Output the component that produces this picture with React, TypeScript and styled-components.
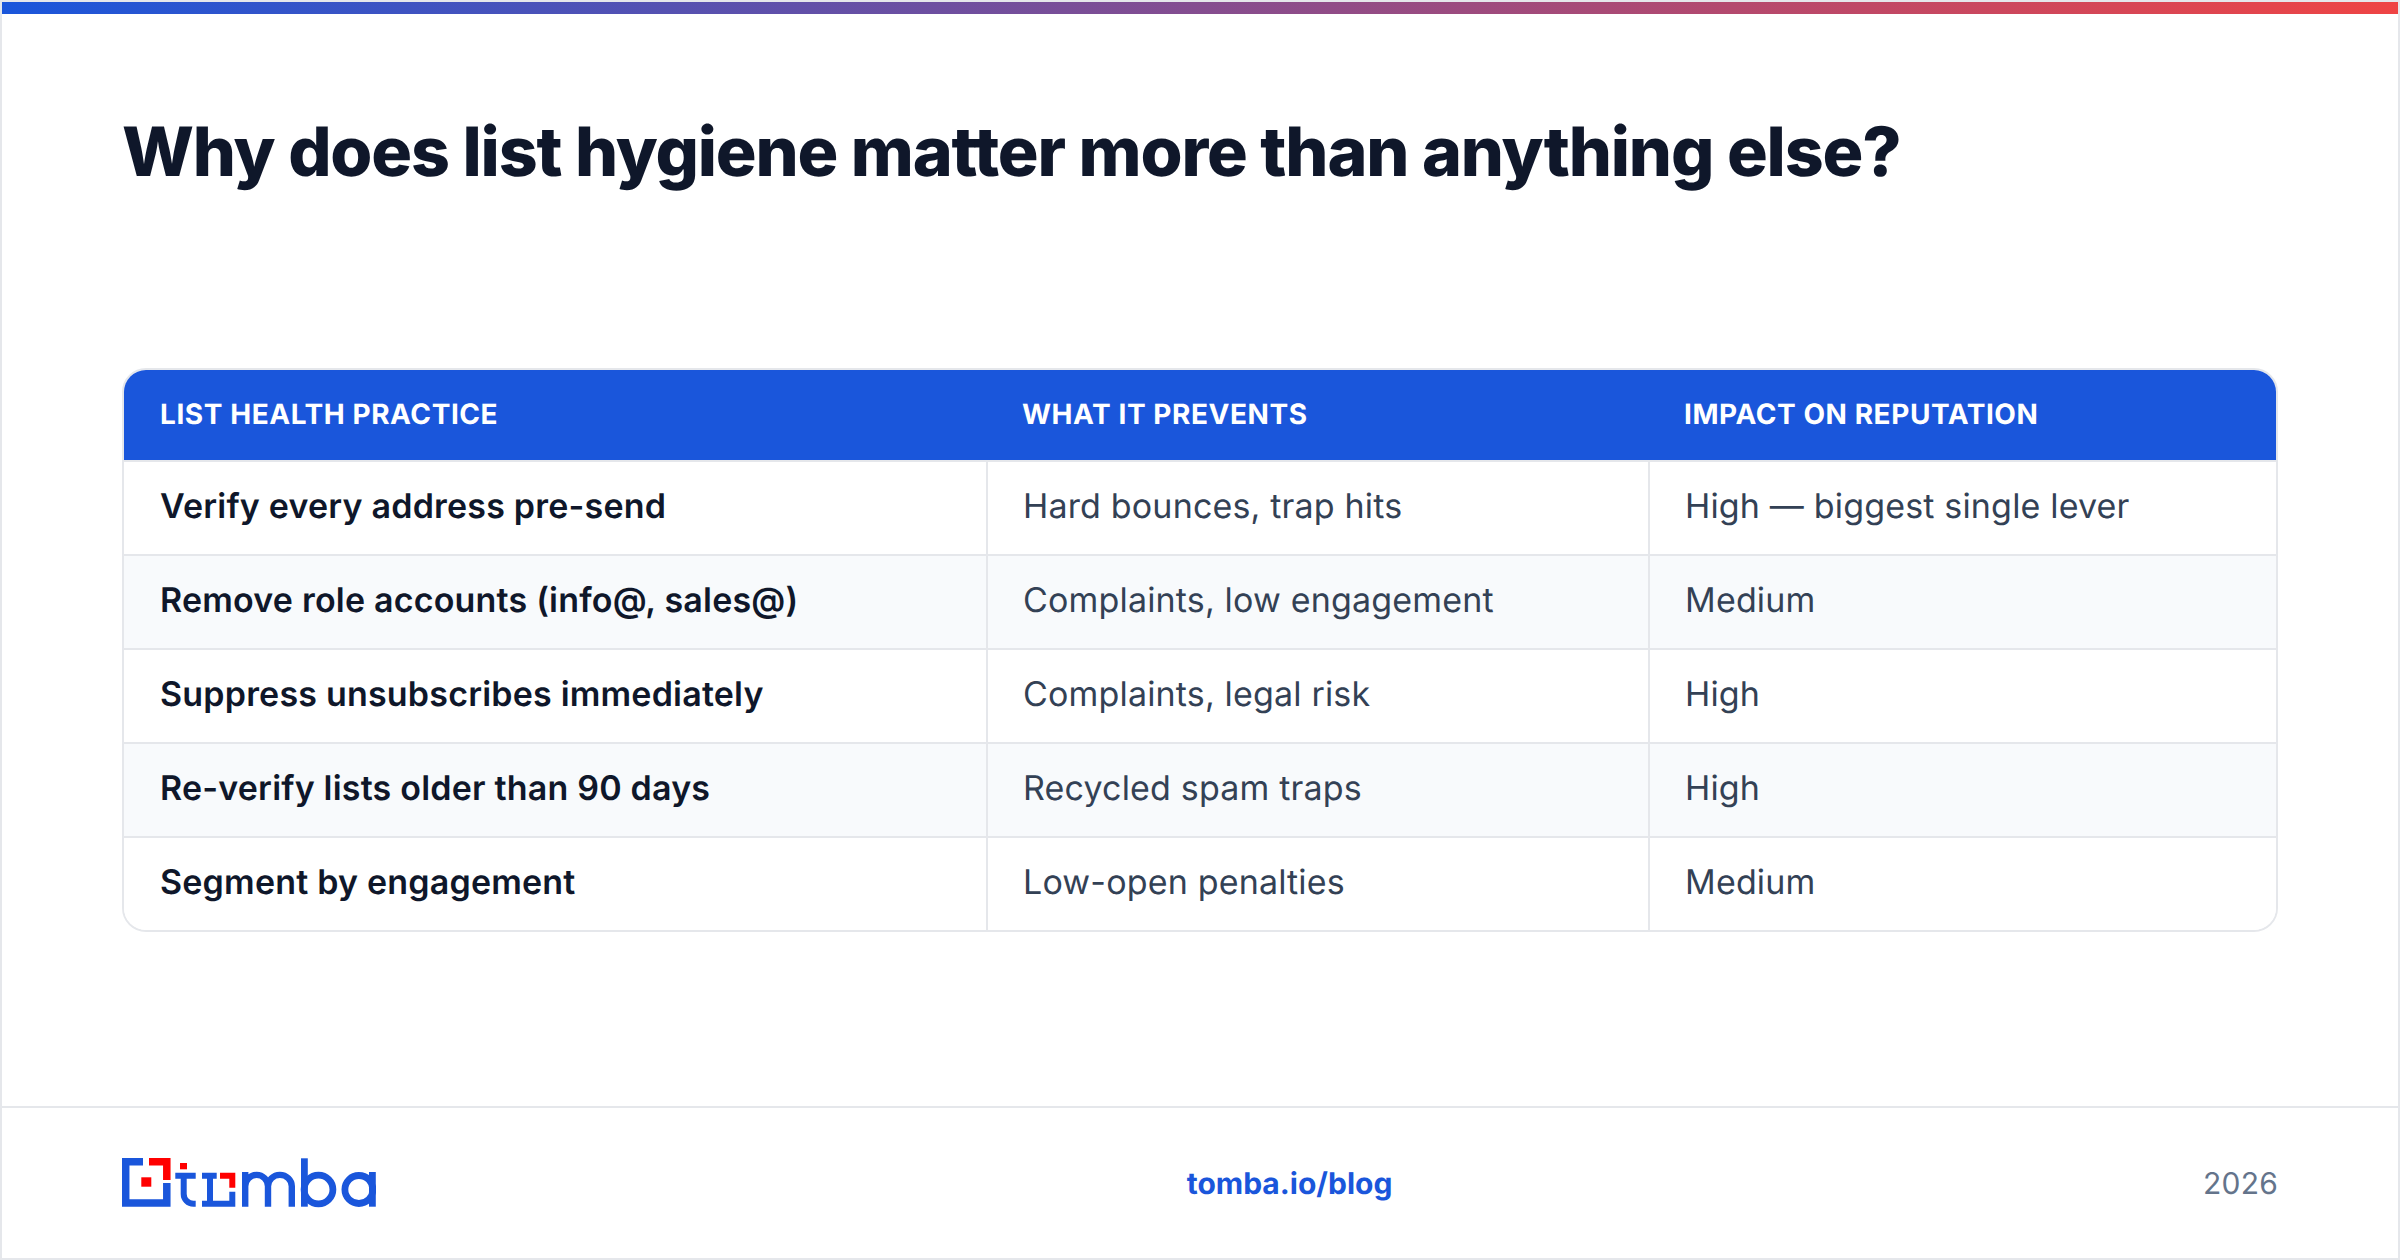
import React from 'react'
import styled, { createGlobalStyle } from 'styled-components'

const GlobalStyle = createGlobalStyle`
  html, body {
    margin: 0;
    padding: 0;
    background: #ffffff;
  }
  * {
    box-sizing: border-box;
  }
`

const Slide = styled.div`
  width: 2400px;
  height: 1260px;
  display: flex;
  flex-direction: column;
  border: 2px solid #e5e7eb;
  background: #ffffff;
  font-family: Inter, "Liberation Sans", sans-serif;
  text-rendering: geometricPrecision;
  overflow: hidden;
`

const TopBar = styled.div`
  height: 12px;
  flex-shrink: 0;
  background: linear-gradient(90deg, #1a56db, #ef4444);
`

const Main = styled.main`
  flex: 1;
  padding: 98px 120px 0;
`

const Title = styled.h1`
  margin: 0 0 176px;
  font-size: 68px;
  line-height: 80px;
  font-weight: 800;
  letter-spacing: -1.17px;
  color: #0f172a;
`

const TableBox = styled.div`
  border: 2px solid #e5e7eb;
  border-radius: 24px;
  overflow: hidden;
`

const HeadRow = styled.div`
  display: grid;
  grid-template-columns: 862px 662px 1fr;
  height: 92px;
  padding-bottom: 2px;
  align-items: center;
  background: #1a56db;
  border-bottom: 2px solid #e5e7eb;
`

const HeadCell = styled.div`
  padding-left: 36px;
  font-size: 28px;
  font-weight: 700;
  letter-spacing: 0.02em;
  color: #ffffff;
  text-transform: uppercase;
`

const Row = styled.div<{ $striped: boolean; $last: boolean }>`
  display: grid;
  grid-template-columns: 864px 662px 1fr;
  height: ${({ $last }) => ($last ? '92px' : '94px')};
  background: ${({ $striped }) => ($striped ? '#f8fafc' : '#ffffff')};
  border-bottom: ${({ $last }) => ($last ? 'none' : '2px solid #e5e7eb')};
`

const Cell = styled.div<{ $strong?: boolean; $end?: boolean }>`
  display: flex;
  align-items: center;
  padding: 0 0 3px ${({ $strong }) => ($strong ? '36px' : '35px')};
  font-size: 34px;
  letter-spacing: ${({ $strong }) => ($strong ? '0.2px' : '0.17px')};
  font-weight: ${({ $strong }) => ($strong ? 600 : 400)};
  color: ${({ $strong }) => ($strong ? '#0f172a' : '#334155')};
  border-right: ${({ $end }) => ($end ? 'none' : '2px solid #e5e7eb')};
`

const Footer = styled.footer`
  height: 152px;
  flex-shrink: 0;
  display: flex;
  align-items: center;
  justify-content: space-between;
  padding: 0 120px;
  border-top: 2px solid #e5e7eb;
`

const FooterLink = styled.span`
  padding-top: 2px;
  font-size: 30px;
  font-weight: 700;
  color: #1a56db;
`

const Year = styled.span`
  padding-top: 2px;
  font-size: 30px;
  letter-spacing: 0.2px;
  color: #64748b;
`

const LogoSvg = styled.svg`
  display: block;
  width: 254px;
  height: 50px;
`

const rows = [
  ['Verify every address pre-send', 'Hard bounces, trap hits', 'High — biggest single lever'],
  ['Remove role accounts (info@, sales@)', 'Complaints, low engagement', 'Medium'],
  ['Suppress unsubscribes immediately', 'Complaints, legal risk', 'High'],
  ['Re-verify lists older than 90 days', 'Recycled spam traps', 'High'],
  ['Segment by engagement', 'Low-open penalties', 'Medium'],
]

function Logo() {
  return (
    <LogoSvg viewBox="0 0 254 50" role="img" aria-label="tomba">
      {/* square mark */}
      <path d="M21 3.7H3.7V45H44.8V25" fill="none" stroke="#1a56db" strokeWidth="7.5" />
      <path d="M27 3.7H44.8V22" fill="none" stroke="#ff0000" strokeWidth="7.5" />
      <rect x="19.3" y="19.3" width="10" height="9.4" fill="#ff0000" />
      {/* t */}
      <rect x="58" y="5" width="7" height="6.3" fill="#ff0000" />
      <path d="M53.3 17.7H73.7M61.7 14.7V36A9.7 9.7 0 0 0 71.4 45.7H73.7" fill="none" stroke="#1a56db" strokeWidth="6" />
      {/* square o */}
      <path d="M80 17.7H94.7M88 14.7V45.7M80 45.7H110.3V33.7" fill="none" stroke="#1a56db" strokeWidth="6" />
      <path d="M98 17.7H110.3V29.7" fill="none" stroke="#ff0000" strokeWidth="6" />
      {/* m */}
      <path d="M123.2 14V48.7M123.2 28.3A11.4 11.4 0 0 1 146 28.3V48.7M146 28.3A11.9 11.4 0 0 1 169.8 28.3V48.7" fill="none" stroke="#1a56db" strokeWidth="6.4" />
      {/* b */}
      <path d="M182.4 0.3V48.7" fill="none" stroke="#1a56db" strokeWidth="6.8" />
      <circle cx="196.5" cy="31.5" r="14.4" fill="none" stroke="#1a56db" strokeWidth="6.8" />
      {/* a */}
      <circle cx="236.9" cy="31.5" r="14" fill="none" stroke="#1a56db" strokeWidth="6.8" />
      <path d="M250.4 14V48.7" fill="none" stroke="#1a56db" strokeWidth="6.8" />
    </LogoSvg>
  )
}

export default function App() {
  return (
    <Slide>
      <GlobalStyle />
      <TopBar />
      <Main>
        <Title>Why does list hygiene matter more than anything else?</Title>
        <TableBox>
          <HeadRow>
            <HeadCell>List health practice</HeadCell>
            <HeadCell>What it prevents</HeadCell>
            <HeadCell>Impact on reputation</HeadCell>
          </HeadRow>
          {rows.map((row, i) => (
            <Row key={row[0]} $striped={i % 2 === 1} $last={i === rows.length - 1}>
              <Cell $strong>{row[0]}</Cell>
              <Cell>{row[1]}</Cell>
              <Cell $end>{row[2]}</Cell>
            </Row>
          ))}
        </TableBox>
      </Main>
      <Footer>
        <Logo />
        <FooterLink>tomba.io/blog</FooterLink>
        <Year>2026</Year>
      </Footer>
    </Slide>
  )
}
